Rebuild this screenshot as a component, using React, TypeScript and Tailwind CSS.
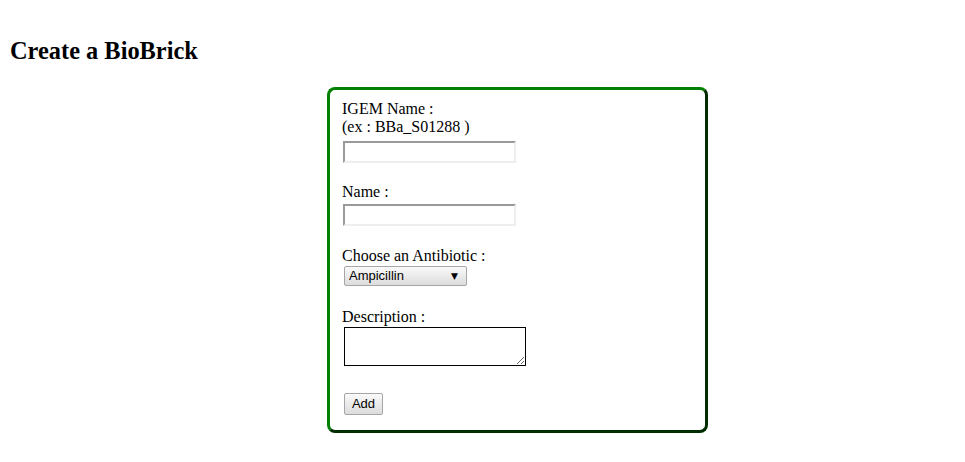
export default function App() {
  return (
    <div className="min-h-screen bg-white text-black [font-family:'Liberation_Serif',serif]">
      <h2 className="pl-[10px] pt-[37px] text-[24.4px] font-bold leading-[27px]">
        Create a BioBrick
      </h2>

      <form
        className="ml-[327px] mt-[23px] flex w-[381px] flex-col rounded-[8px] border-[3px] border-[#008000] [border-style:outset] px-[12px] pb-[15px] pt-[10px] text-[16px] leading-[18.4px]"
        onSubmit={(e) => e.preventDefault()}
      >
        <label htmlFor="igem">
          IGEM Name :
          <br />
          (ex : BBa_S01288 )
        </label>
        <input
          id="igem"
          type="text"
          className="ml-[1px] mt-[4px] h-[22px] w-[173px] border-2 border-t-[#9a9a9a] border-l-[#9a9a9a] border-b-[#eeeeee] border-r-[#eeeeee] bg-white outline-none"
        />

        <label htmlFor="name" className="mt-[20px]">
          Name :
        </label>
        <input
          id="name"
          type="text"
          className="ml-[1px] mt-[3px] h-[22px] w-[173px] border-2 border-t-[#9a9a9a] border-l-[#9a9a9a] border-b-[#eeeeee] border-r-[#eeeeee] bg-white outline-none"
        />

        <label htmlFor="antibiotic" className="mt-[21px]">
          Choose an Antibiotic :
        </label>
        <div className="relative ml-[2px] w-[123px]">
          <select
            id="antibiotic"
            className="h-[20px] w-full appearance-none rounded-[2px] border border-[#a6a6a6] bg-gradient-to-b from-[#fafafa] to-[#dcdcdc] pl-[4px] text-[13px] leading-[18px] text-black [font-family:'Liberation_Sans',sans-serif]"
          >
            <option>Ampicillin</option>
            <option>Kanamycin</option>
            <option>Chloramphenicol</option>
            <option>Tetracycline</option>
          </select>
          <span className="pointer-events-none absolute right-[9px] top-[5px] text-[9px] leading-[10px] [font-family:'DejaVu_Sans',sans-serif]">
            ▼
          </span>
        </div>

        <label htmlFor="desc" className="mt-[22px]">
          Description :
        </label>
        <textarea
          id="desc"
          className="ml-[2px] mt-[1px] h-[39px] w-[182px] border border-black bg-white outline-none"
        />

        <div className="mt-[27px]">
          <button
            type="submit"
            className="ml-[2px] h-[22px] w-[39px] rounded-[2px] border border-[#a6a6a6] bg-gradient-to-b from-[#fafafa] to-[#dcdcdc] text-[13px] text-black [font-family:'Liberation_Sans',sans-serif]"
          >
            Add
          </button>
        </div>
      </form>
    </div>
  );
}
